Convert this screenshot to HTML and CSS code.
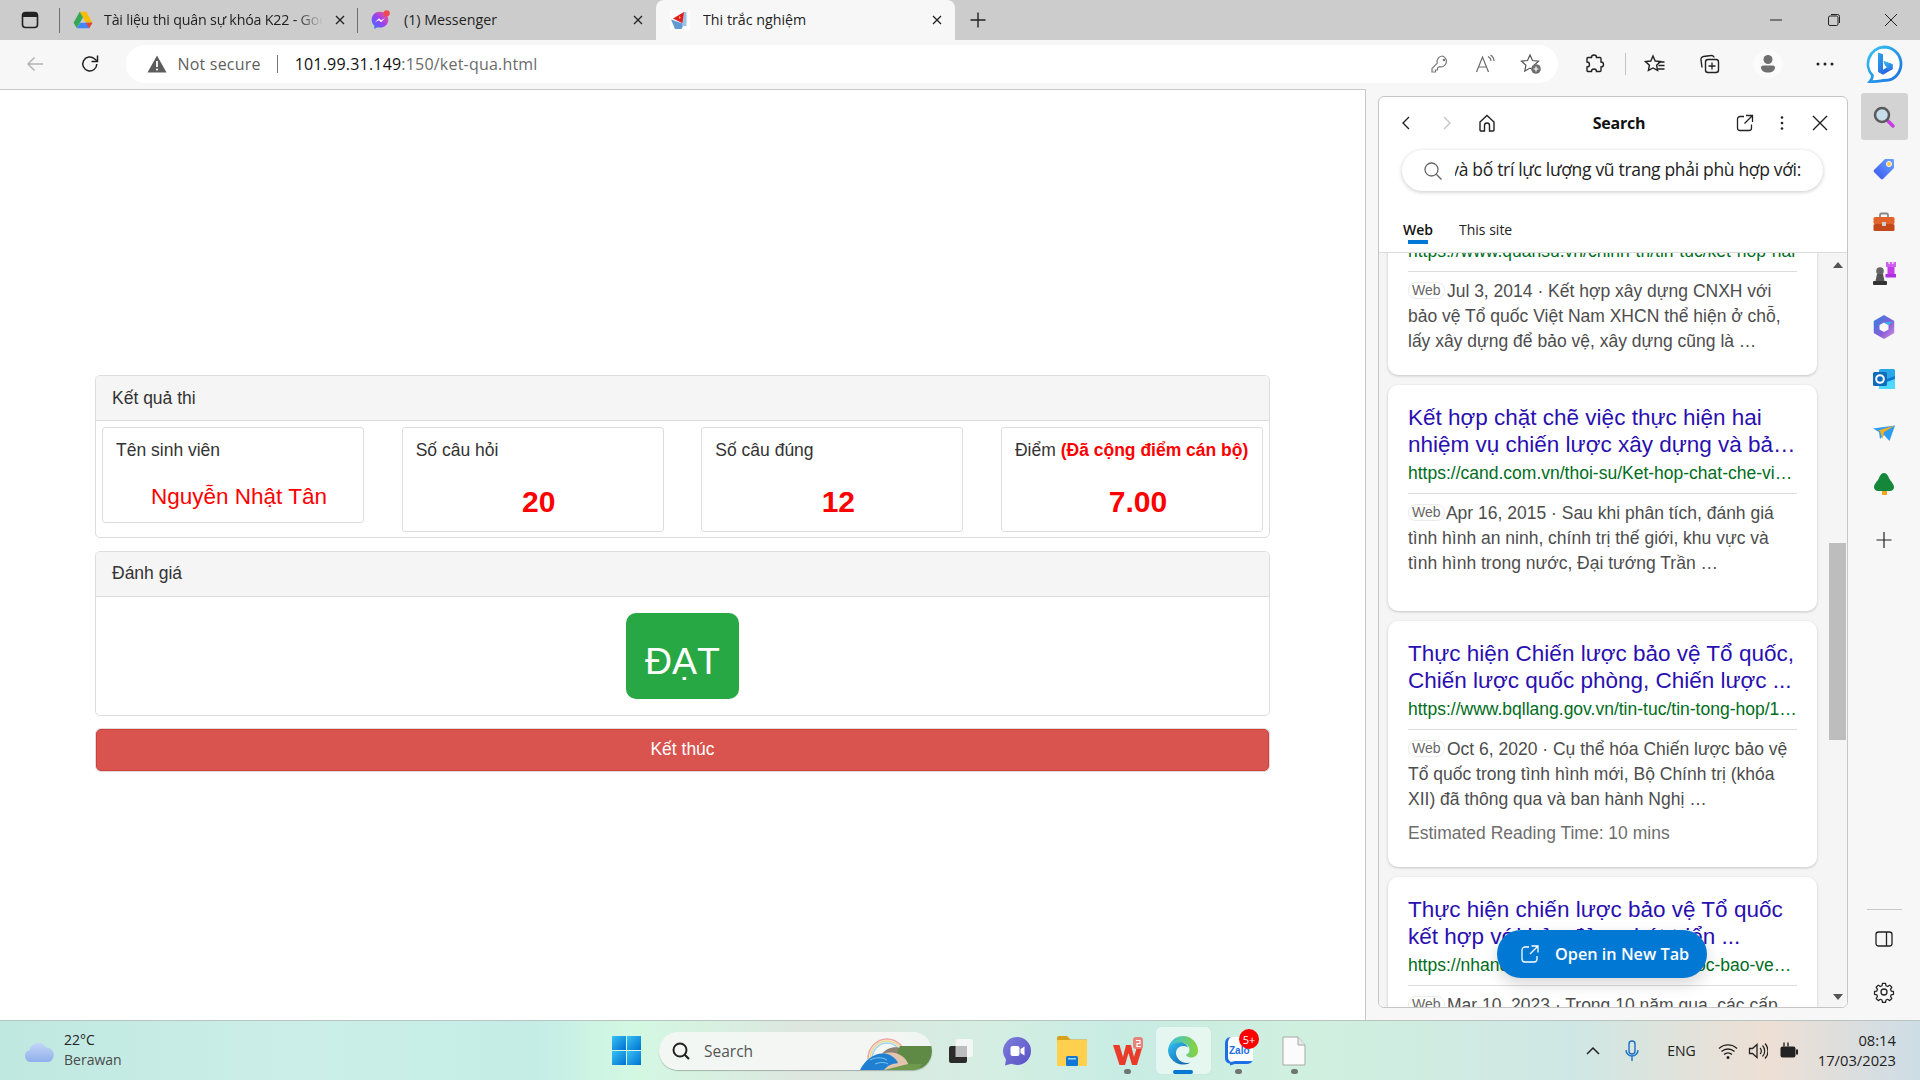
FILE: index.html
```html
<!DOCTYPE html>
<html lang="vi">
<head>
<meta charset="utf-8">
<title>Thi trắc nghiệm</title>
<link rel="stylesheet" href="styles.css">
</head>
<body>
<div class="window">
  <header class="tabstrip">
    <div class="tab-actions">
      <svg class="ic20" viewBox="0 0 20 20"><rect x="2.500" y="2.500" width="15" height="15" rx="3" fill="none" stroke="#222" stroke-width="1.600"/><rect x="3" y="3" width="14" height="4" fill="#222"/></svg>
    </div>
    <div class="tab tab-first">
      <svg class="ic20" viewBox="0 0 18 18"><path d="M6 1.500h6l5.500 10h-6z" fill="#fbbc04"/><path d="M6 1.500L.5 11.500l3 5L9 6.500z" fill="#34a853"/><path d="M3.500 16.500h11l3-5H6.500z" fill="#4285f4"/><path d="M11.500 11.500h6l-3 5z" fill="#ea4335"/></svg>
      <span class="tab-title tab-fade">Tài liệu thi quân sự khóa K22 - Google Drive</span>
      <svg class="tab-x" viewBox="0 0 12 12"><path d="M2 2l8 8M10 2l-8 8" stroke="#222" stroke-width="1.300"/></svg>
    </div>
    <div class="tab tab-sep">
      <svg class="ic20" viewBox="0 0 18 18"><defs><linearGradient id="ms" x1="0" y1="1" x2="1" y2="0"><stop offset="0" stop-color="#2a7bff"/><stop offset=".5" stop-color="#9b3ff5"/><stop offset="1" stop-color="#ff5b74"/></linearGradient></defs><path d="M9 1.500c-4.300 0-7.500 3.100-7.500 7.200 0 2.200.9 4 2.400 5.300v3l2.700-1.500c.8.200 1.600.3 2.400.3 4.300 0 7.500-3.100 7.500-7.100S13.300 1.500 9 1.500z" fill="url(#ms)"/><path d="M4.500 11L8 7.500l2 1.700 3.500-2-3.500 3.800-2-1.700z" fill="#fff"/><circle cx="15" cy="3" r="2.800" fill="#f0484e"/></svg>
      <span class="tab-title">(1) Messenger</span>
      <svg class="tab-x" viewBox="0 0 12 12"><path d="M2 2l8 8M10 2l-8 8" stroke="#222" stroke-width="1.300"/></svg>
    </div>
    <div class="tab tab-active">
      <svg class="ic20" viewBox="0 0 20 20"><rect width="20" height="20" fill="#fff"/><path d="M3 8.500L14 2v12z" fill="#e01f26"/><path d="M9 6l2 1.500-2 1.500z" fill="#ffc107"/><path d="M1 9.500l13 4.500-2.500 5H5z" fill="#5f9bd0"/><path d="M14 2h2.500v14H12z" fill="#9cc3e6"/></svg>
      <span class="tab-title">Thi trắc nghiệm</span>
      <svg class="tab-x" viewBox="0 0 12 12"><path d="M2 2l8 8M10 2l-8 8" stroke="#222" stroke-width="1.300"/></svg>
    </div>
    <div class="new-tab"><svg class="ic20" viewBox="0 0 20 20"><path d="M10 2.500v15M2.500 10h15" stroke="#222" stroke-width="1.400"/></svg></div>
    <div class="win-controls">
      <div class="win-btn"><svg class="ic14" viewBox="0 0 14 14"><path d="M1 7h12" stroke="#222" stroke-width="1"/></svg></div>
      <div class="win-btn"><svg class="ic14" viewBox="0 0 14 14"><rect x="1.500" y="3" width="9.500" height="9.500" rx="1.500" fill="none" stroke="#222"/><path d="M4 1.500h6.500a2 2 0 0 1 2 2V10" fill="none" stroke="#222"/></svg></div>
      <div class="win-btn"><svg class="ic14" viewBox="0 0 14 14"><path d="M1 1l12 12M13 1L1 13" stroke="#222" stroke-width="1"/></svg></div>
    </div>
  </header>

  <nav class="toolbar">
    <div class="tb-btn tb-back"><svg class="ic20" viewBox="0 0 20 20"><path d="M18 10H3M9.500 3.500L3 10l6.500 6.500" fill="none" stroke="#b5b5b5" stroke-width="1.500"/></svg></div>
    <div class="tb-btn tb-reload"><svg class="ic22" viewBox="0 0 22 22"><path d="M17.800 11a7 7 0 1 1-2.300-5.200L18 8" fill="none" stroke="#222" stroke-width="1.500"/><path d="M18.500 2.500V8.500h-6" fill="none" stroke="#222" stroke-width="1.500"/></svg></div>
    <div class="address">
      <svg class="ic20" viewBox="0 0 20 20"><path d="M10 1.500L19.500 18.500H.5z" fill="#5c5c5c"/><path d="M10 7v6" stroke="#fff" stroke-width="1.800"/><circle cx="10" cy="15.500" r="1.100" fill="#fff"/></svg>
      <span class="not-secure">Not secure</span>
      <span class="addr-sep"></span>
      <span class="url"><span class="url-host">101.99.31.149</span>:150/ket-qua.html</span>
      <div class="addr-icons">
        <svg class="ic20" viewBox="0 0 20 20"><path d="M12.500 2a5.500 5.500 0 0 0-5.200 7.200L2 14.500V18h3.500v-2h2v-2l1.700-1.300A5.500 5.500 0 1 0 12.500 2z" fill="none" stroke="#7a7a7a" stroke-width="1.200"/><circle cx="14" cy="6" r="1.300" fill="#7a7a7a"/></svg>
        <svg class="ic20" viewBox="0 0 20 20"><path d="M1.500 18L7.500 3l6 15M3.800 13h7.500" fill="none" stroke="#6a6a6a" stroke-width="1.200"/><path d="M13 2.500c2 1 3 2.500 3 4.500M15.500 1c2 1.300 3.500 3.500 3.500 6" fill="none" stroke="#6a6a6a" stroke-width="1.100"/></svg>
        <svg class="ic22" viewBox="0 0 22 22"><path d="M10 2l2.500 5.500 6 .7-4.400 4 1.100 5.800L10 15.100l-5.200 2.900 1.100-5.800-4.400-4 6-.7z" fill="none" stroke="#555" stroke-width="1.200"/><circle cx="16" cy="16" r="4.800" fill="#6e6e6e"/><path d="M16 13.500v5M13.500 16h5" stroke="#fff" stroke-width="1.200"/></svg>
      </div>
    </div>
    <div class="tb-btn tb-ext"><svg class="ic22" viewBox="0 0 22 22"><path d="M8.500 4.500a2.500 2.500 0 0 1 5 0H17a1 1 0 0 1 1 1V9a2.500 2.500 0 0 1 0 5v3.500a1 1 0 0 1-1 1h-3.500a2.500 2.500 0 0 0-5 0H5a1 1 0 0 1-1-1V14a2.500 2.500 0 0 0 0-5V5.500a1 1 0 0 1 1-1z" fill="none" stroke="#222" stroke-width="1.400"/></svg></div>
    <span class="tb-sep"></span>
    <div class="tb-btn tb-fav"><svg class="ic22" viewBox="0 0 22 22"><path d="M9 3l2.200 5 5.300.6-3.900 3.600 1 5.200L9 15l-4.600 2.400 1-5.200L1.500 8.600 6.800 8z" fill="none" stroke="#222" stroke-width="1.400"/><path d="M14 9h6.500M14.500 12.500h6M14 16h6.500" stroke="#222" stroke-width="1.300"/></svg></div>
    <div class="tb-btn tb-coll"><svg class="ic22" viewBox="0 0 22 22"><rect x="6.500" y="6.500" width="13" height="13" rx="2.500" fill="none" stroke="#222" stroke-width="1.400"/><path d="M13 9.500v7M9.500 13h7" stroke="#222" stroke-width="1.300"/><path d="M3 14.500L2 7a3 3 0 0 1 2.600-3.500L12 2.500a2.500 2.500 0 0 1 3 2" fill="none" stroke="#222" stroke-width="1.400"/></svg></div>
    <div class="tb-btn tb-profile"><svg class="ic30" viewBox="0 0 30 30"><circle cx="15" cy="15" r="14.500" fill="#fbfbfb"/><circle cx="15" cy="10.500" r="4.500" fill="#707070"/><path d="M8 18.500c0-1.200 1-2 2-2h10c1 0 2 .8 2 2 0 3-3 5-7 5s-7-2-7-5z" fill="#707070"/></svg></div>
    <div class="tb-btn tb-dots"><svg class="ic22" viewBox="0 0 22 22"><circle cx="4" cy="11" r="1.500" fill="#222"/><circle cx="11" cy="11" r="1.500" fill="#222"/><circle cx="18" cy="11" r="1.500" fill="#222"/></svg></div>
    <div class="tb-btn tb-bing"><svg class="ic38" viewBox="0 0 38 38"><defs><linearGradient id="bg1" x1="0" y1="0" x2="1" y2="1"><stop offset="0" stop-color="#28a8ea"/><stop offset="1" stop-color="#2a4fe0"/></linearGradient><linearGradient id="bg2" x1="0" y1="0" x2="1" y2="1"><stop offset="0" stop-color="#33c7ee"/><stop offset="1" stop-color="#2a6ee8"/></linearGradient><linearGradient id="bg3" x1="0" y1="0" x2="1" y2="1"><stop offset="0" stop-color="#37c6f4"/><stop offset="1" stop-color="#1a6fe0"/></linearGradient></defs><path d="M19 2a17 17 0 0 1 8 32c-3 1.500-6 1.500-9 1.500-2 0-5 1.500-13 1 2-2 2.500-4 2.500-6A17 17 0 0 1 19 2z" fill="#fff" stroke="url(#bg3)" stroke-width="2.800"/><path d="M13 7.500l5 1.800v15.500l5-3-3-1.400-1.500-4.500 9 3.300v5l-9.500 5.500L13 27z" fill="url(#bg1)"/><path d="M18.500 15.900l9 3.300v5l-4.500 1z" fill="url(#bg2)"/></svg></div>
  </nav>

  <div class="content">
    <main class="page">
      <section class="panel">
        <div class="panel-head">Kết quả thi</div>
        <div class="stats">
          <div class="stat stat-short">
            <div class="stat-label">Tên sinh viên</div>
            <div class="stat-name">Nguyễn Nhật Tân</div>
          </div>
          <div class="stat">
            <div class="stat-label">Số câu hỏi</div>
            <div class="stat-value">20</div>
          </div>
          <div class="stat">
            <div class="stat-label">Số câu đúng</div>
            <div class="stat-value">12</div>
          </div>
          <div class="stat">
            <div class="stat-label">Điểm <b class="stat-note">(Đã cộng điểm cán bộ)</b></div>
            <div class="stat-value">7.00</div>
          </div>
        </div>
      </section>
      <section class="panel">
        <div class="panel-head">Đánh giá</div>
        <div class="verdict"><div class="badge">ĐẠT</div></div>
      </section>
      <button class="finish">Kết thúc</button>
    </main>

    <aside class="side">
      <div class="side-head">
        <svg class="ic20" viewBox="0 0 20 20"><path d="M13 4l-6 6 6 6" fill="none" stroke="#222" stroke-width="1.400"/></svg>
        <svg class="ic20 sh-fwd" viewBox="0 0 20 20"><path d="M7 4l6 6-6 6" fill="none" stroke="#c4c4c4" stroke-width="1.400"/></svg>
        <svg class="ic20 sh-home" viewBox="0 0 20 20"><path d="M3 9l7-6.500L17 9v8a1 1 0 0 1-1 1h-3.500v-5.500a2.500 2.500 0 0 0-5 0V18H4a1 1 0 0 1-1-1z" fill="none" stroke="#222" stroke-width="1.400"/></svg>
        <div class="side-title">Search</div>
        <svg class="ic20" viewBox="0 0 20 20"><path d="M9 3.500H5a2.500 2.500 0 0 0-2.500 2.500v9A2.500 2.500 0 0 0 5 17.500h9a2.500 2.500 0 0 0 2.500-2.500v-3.500" fill="none" stroke="#222" stroke-width="1.300"/><path d="M11 2.500h6.500V9M17.500 2.500L9.500 10.500" fill="none" stroke="#222" stroke-width="1.300"/></svg>
        <svg class="ic20 sh-dots" viewBox="0 0 20 20"><circle cx="10" cy="4.500" r="1.300" fill="#222"/><circle cx="10" cy="10" r="1.300" fill="#222"/><circle cx="10" cy="15.500" r="1.300" fill="#222"/></svg>
        <svg class="ic20 sh-close" viewBox="0 0 20 20"><path d="M3 3l14 14M17 3L3 17" stroke="#222" stroke-width="1.400"/></svg>
      </div>
      <div class="side-search">
        <svg class="ic20" viewBox="0 0 20 20"><circle cx="8.500" cy="8.500" r="6.500" fill="none" stroke="#666" stroke-width="1.300"/><path d="M13.300 13.300L18.500 18.500" stroke="#666" stroke-width="1.400"/></svg>
        <div class="side-query"><span class="side-query-text">và bố trí lực lượng vũ trang phải phù hợp với:</span></div>
      </div>
      <div class="side-tabs">
        <span class="side-tab side-tab-on">Web</span>
        <span class="side-tab">This site</span>
      </div>
      <div class="side-body">
        <div class="results">
          <article class="result result-first">
            <div class="r-url">https://www.quansu.vn/chinh-tri/tin-tuc/ket-hop-nam…</div>
            <div class="r-rule"></div>
            <p class="r-text"><span class="r-tag">Web</span> Jul 3, 2014 · Kết hợp xây dựng CNXH với<br>bảo vệ Tổ quốc Việt Nam XHCN thể hiện ở chỗ,<br>lấy xây dựng để bảo vệ, xây dựng cũng là …</p>
          </article>
          <article class="result result-tall">
            <h3 class="r-title">Kết hợp chặt chẽ việc thực hiện hai<br>nhiệm vụ chiến lược xây dựng và bả…</h3>
            <div class="r-url">https://cand.com.vn/thoi-su/Ket-hop-chat-che-vi…</div>
            <div class="r-rule"></div>
            <p class="r-text"><span class="r-tag">Web</span> Apr 16, 2015 · Sau khi phân tích, đánh giá<br>tình hình an ninh, chính trị thế giới, khu vực và<br>tình hình trong nước, Đại tướng Trần …</p>
          </article>
          <article class="result">
            <h3 class="r-title">Thực hiện Chiến lược bảo vệ Tổ quốc,<br>Chiến lược quốc phòng, Chiến lược ...</h3>
            <div class="r-url">https://www.bqllang.gov.vn/tin-tuc/tin-tong-hop/1…</div>
            <div class="r-rule"></div>
            <p class="r-text"><span class="r-tag">Web</span> Oct 6, 2020 · Cụ thể hóa Chiến lược bảo vệ<br>Tổ quốc trong tình hình mới, Bộ Chính trị (khóa<br>XII) đã thông qua và ban hành Nghị …</p>
            <p class="r-meta">Estimated Reading Time: 10 mins</p>
          </article>
          <article class="result">
            <h3 class="r-title">Thực hiện chiến lược bảo vệ Tổ quốc<br>kết hợp với bảo đảm phát triển ...</h3>
            <div class="r-url">https://nhandan.vn/thuc-hien-chien-luoc-bao-ve…</div>
            <div class="r-rule"></div>
            <p class="r-text"><span class="r-tag">Web</span> Mar 10, 2023 · Trong 10 năm qua, các cấp</p>
          </article>
        </div>
        <div class="scroll">
          <svg class="scroll-arrow" viewBox="0 0 10 6"><path d="M5 0l5 6H0z" fill="#555"/></svg>
          <div class="scroll-track"><div class="scroll-thumb"></div></div>
          <svg class="scroll-arrow" viewBox="0 0 10 6"><path d="M5 6L0 0h10z" fill="#555"/></svg>
        </div>
      </div>
      <div class="open-new">
        <svg class="ic20" viewBox="0 0 20 20"><path d="M9 3H5a3 3 0 0 0-3 3v9a3 3 0 0 0 3 3h9a3 3 0 0 0 3-3v-3" fill="none" stroke="#fff" stroke-width="1.300"/><path d="M11.500 2h6.500v6.500M18 2l-8 8" fill="none" stroke="#fff" stroke-width="1.300"/></svg>
        <span>Open in New Tab</span>
      </div>
    </aside>

    <div class="rail">
      <div class="rail-top">
        <div class="rail-item rail-on"><svg class="ic24" viewBox="0 0 24 24"><path d="M15 15l6 6" stroke="#c53ce0" stroke-width="3.500" stroke-linecap="round"/><circle cx="10" cy="10" r="7" fill="#c6deeb" stroke="#5a5a5a" stroke-width="2.500"/></svg></div>
        <div class="rail-item"><svg class="ic24" viewBox="0 0 24 24"><defs><linearGradient id="tag" x1="0" y1="1" x2="1" y2="0"><stop offset="0" stop-color="#3a55f0"/><stop offset="1" stop-color="#6aa6ff"/></linearGradient></defs><path d="M13 2h8a1 1 0 0 1 1 1v8L11 22a1.500 1.500 0 0 1-2 0L2 15a1.500 1.500 0 0 1 0-2z" fill="url(#tag)"/><circle cx="17" cy="7" r="2.500" fill="#ffc83d" stroke="#fff"/></svg></div>
        <div class="rail-item"><svg class="ic24" viewBox="0 0 24 24"><path d="M8 8V5a1.500 1.500 0 0 1 1.500-1.500h5A1.500 1.500 0 0 1 16 5v3" fill="none" stroke="#888" stroke-width="1.800"/><rect x="1.500" y="7" width="21" height="7" rx="1.500" fill="#e2622b"/><rect x="1.500" y="14" width="21" height="7" rx="1.500" fill="#c5481b"/><rect x="10" y="12" width="4" height="4" fill="#d0d0d0"/></svg></div>
        <div class="rail-item"><svg class="ic24" viewBox="0 0 24 24"><rect x="15.500" y="4" width="7" height="8" fill="#c53ce8"/><path d="M14 0h2.500v2h1.300V0h2.400v2h1.300V0H24v5H14z" fill="#d060f0"/><rect x="13.500" y="12" width="10.500" height="3.500" fill="#b030e0"/><circle cx="8" cy="9" r="3.800" fill="#666"/><path d="M5 12h6l1.500 7h-9z" fill="#555"/><rect x="1" y="19" width="14" height="4" rx="1" fill="#333"/></svg></div>
        <div class="rail-item"><svg class="ic24" viewBox="0 0 24 24"><defs><linearGradient id="cp" x1="0" y1="0" x2="1" y2="1"><stop offset="0" stop-color="#2f7fe0"/><stop offset=".6" stop-color="#8a5fd8"/><stop offset="1" stop-color="#d08fe0"/></linearGradient></defs><path d="M12 1l9.500 5.500v11L12 23l-9.500-5.500v-11z" fill="url(#cp)" stroke="url(#cp)" stroke-linejoin="round" stroke-width="1.500"/><path d="M12 7.500l4.500 2.500v4.500L12 17l-4.500-2.500V10z" fill="#f7f7f7"/><path d="M12 7.500L21.500 6.500 16.500 10z" fill="#33b5f0"/></svg></div>
        <div class="rail-item"><svg class="ic24" viewBox="0 0 24 24"><rect x="7" y="2" width="16" height="20" rx="1.500" fill="#28a8ea"/><path d="M7 12h16v9a1 1 0 0 1-1 1H8a1 1 0 0 1-1-1z" fill="#50d9ff"/><path d="M9 14l14-5v3L12 16z" fill="#0f78d4"/><rect x="1" y="5" width="14" height="14" rx="1.500" fill="#0f6cbd"/><circle cx="8" cy="12" r="3.800" fill="none" stroke="#fff" stroke-width="2"/></svg></div>
        <div class="rail-item"><svg class="ic24" viewBox="0 0 24 24"><path d="M1 8.500L23 5.500 17.500 21 12 15l-4 4-1-7z" fill="#2f9bf0"/><path d="M6 10.500L23 5.500 12 12l-1.500 7-2.500-8z" fill="#f4b01f"/></svg></div>
        <div class="rail-item"><svg class="ic24" viewBox="0 0 24 24"><rect x="10" y="17" width="5" height="6" fill="#f2a51f"/><path d="M12 1c3 0 4 3 5.500 6 1 2 4.500 5 4.500 8 0 2.500-2 4-4 4H6c-2 0-4-1.500-4-4 0-3 3.500-6 4.500-8C8 4 9 1 12 1z" fill="#14873a"/></svg></div>
        <div class="rail-item rail-plus"><svg class="ic20" viewBox="0 0 20 20"><path d="M10 2v16M2.500 10h15" stroke="#222" stroke-width="1.200"/></svg></div>
      </div>
      <div class="rail-bottom">
        <div class="rail-line"></div>
        <svg class="ic20 rail-panel" viewBox="0 0 20 20"><rect x="2" y="3" width="16" height="14" rx="2.500" fill="none" stroke="#222" stroke-width="1.300"/><path d="M12.500 3v14" stroke="#222" stroke-width="1.300"/></svg>
        <svg class="ic22" viewBox="0 0 22 22"><path d="M9.300 1.500h3.400l.5 2.600 1.900.8 2.200-1.500 2.400 2.400-1.500 2.200.8 1.900 2.500.5v3.200l-2.500.5-.8 1.900 1.500 2.200-2.400 2.400-2.200-1.500-1.900.8-.5 2.500H9.300l-.5-2.500-1.900-.8-2.200 1.500-2.400-2.400 1.500-2.200-.8-1.900-2.500-.5v-3.200l2.500-.5.8-1.900-1.500-2.200 2.400-2.400 2.200 1.500 1.900-.8z" transform="translate(1.100 1.100) scale(.9)" fill="none" stroke="#222" stroke-width="1.400" stroke-linejoin="round"/><circle cx="11" cy="11" r="3" fill="none" stroke="#222" stroke-width="1.300"/></svg>
      </div>
    </div>
  </div>

  <footer class="taskbar">
    <div class="weather">
      <svg class="weather-ic" viewBox="0 0 32 26"><defs><linearGradient id="cl" x1="0" y1="0" x2="0" y2="1"><stop offset="0" stop-color="#c2d4f8"/><stop offset="1" stop-color="#8fb0ea"/></linearGradient></defs><path d="M7 24a6 6 0 0 1-1.500-11.800A9 9 0 0 1 22 9.500a7.500 7.500 0 0 1 3 14.500z" fill="url(#cl)"/></svg>
      <div class="weather-text"><div class="w-temp">22°C</div><div class="w-desc">Berawan</div></div>
    </div>
    <svg class="start" viewBox="0 0 29 29"><defs><linearGradient id="win" x1="0" y1="0" x2="1" y2="1"><stop offset="0" stop-color="#36c2f5"/><stop offset="1" stop-color="#0070d0"/></linearGradient></defs><rect width="14" height="14" fill="url(#win)"/><rect x="15" width="14" height="14" fill="url(#win)"/><rect y="15" width="14" height="14" fill="url(#win)"/><rect x="15" y="15" width="14" height="14" fill="url(#win)"/></svg>
    <div class="task-search">
      <svg class="ic20" viewBox="0 0 20 20"><circle cx="9" cy="9" r="6.500" fill="none" stroke="#222" stroke-width="2"/><path d="M13.500 13.500L18 18" stroke="#222" stroke-width="2.200"/></svg>
      <span class="ts-label">Search</span>
      <svg class="ts-art" viewBox="0 0 72 38"><path d="M8 27a19 20 0 0 1 38 0" fill="none" stroke="#f0a5a5" stroke-width="1.500"/><path d="M10 27a17 18 0 0 1 34 0" fill="none" stroke="#eed98a" stroke-width="1.500"/><path d="M12 27a15 16 0 0 1 30 0" fill="none" stroke="#9fd3ee" stroke-width="1.500"/><path d="M22 22c4-6 14-9 20-5l-3 8z" fill="#8d8272"/><path d="M40 14h32v10c0 8-5 14-10 14H30z" fill="#5f8a45"/><path d="M18 24c10-6 22-4 28 4l6 10H24z" fill="#e3c4ac"/><path d="M0 38c6-12 18-20 30-15 4 2 7 5 8 8-6 1-10 2-14 7z" fill="#1f7fd0"/><path d="M10 28c6-3 12-3 17 0M15 32c5-2 10-2 13 0" fill="none" stroke="#7cc8f2" stroke-width="1"/><path d="M24 38l24-6h14l-4 6z" fill="#6f9a4d"/></svg>
    </div>
    <div class="task-items">
      <div class="task-item"><svg class="ic26" viewBox="0 0 26 26"><rect x="7.500" y="1" width="17.500" height="18" rx="2" fill="#f8f8f8" fill-opacity=".85"/><rect x="1" y="8" width="18" height="17" rx="2" fill="#2b2b2b"/><rect x="7.500" y="8" width="11.500" height="11" fill="#bdbdbd"/></svg></div>
      <div class="task-item"><svg class="ic30" viewBox="0 0 30 30"><defs><linearGradient id="chat" x1="0" y1="0" x2="1" y2="1"><stop offset="0" stop-color="#7b7fdc"/><stop offset="1" stop-color="#5a4fc4"/></linearGradient></defs><path d="M15 1a14 14 0 0 1 0 28c-2 0-4-.5-5.500-1.200L3 29.500l1-6A14 14 0 0 1 15 1z" fill="url(#chat)"/><rect x="8.500" y="10" width="9" height="10" rx="2" fill="#fff"/><path d="M18.500 13l4-2.500v9l-4-2.500z" fill="#fff"/></svg></div>
      <div class="task-item"><svg class="ic30" viewBox="0 0 30 30"><path d="M0 1.500a1.500 1.500 0 0 1 1.500-1.500H10l3.500 3.500H30V9H0z" fill="#d9a21b"/><rect y="4" width="30" height="26" rx="1" fill="#ffcf4d"/><rect x="9" y="20" width="12" height="10" rx="1.500" fill="#0f78d4"/><rect x="11" y="22" width="8" height="1.500" fill="#9fd3f5"/></svg></div>
      <div class="task-item"><svg class="ic30" viewBox="0 0 30 30"><path d="M0 9h6.500l3.500 12 3-12h5l3 12L24.500 9H30l-6 20h-5l-3.500-12L12 29H6.500z" fill="#e93a2a"/><rect x="20" y="1" width="10" height="12" rx="3" fill="#e8837a"/><path d="M23 4.500h4v3h-3v3h4" fill="none" stroke="#fff" stroke-width="1.200"/></svg><span class="task-dot"></span></div>
      <div class="task-item task-active"><svg class="ic32" viewBox="0 0 32 32"><defs><linearGradient id="ed1" x1="0" y1="0" x2="1" y2="1"><stop offset="0" stop-color="#35c1f1"/><stop offset="1" stop-color="#0b5aa8"/></linearGradient><linearGradient id="ed2" x1="0" y1="0" x2="1" y2="0"><stop offset="0" stop-color="#35c1f1"/><stop offset="1" stop-color="#8ad433"/></linearGradient></defs><path d="M16 1a15 15 0 0 1 15 15c0 4-3 6.500-7 6.500-3 0-5-1.500-5-3 2-.5 3.500-2 3.500-4.500C22.500 11 19 8 14 8 8 8 3 12 1.200 14A15 15 0 0 1 16 1z" fill="url(#ed2)"/><path d="M1 16C1 11 6 7.500 12 7.500c5 0 8 2 9 5-1-1-3-1.500-5-1.500-4 0-7 3-7 7 0 5 5 10 11 10 1 0 2.500-.2 4-.8A15 15 0 0 1 1 16z" fill="url(#ed1)"/></svg><span class="task-bar"></span></div>
      <div class="task-item"><svg class="ic30" viewBox="0 0 30 30"><path d="M7 1h16a6 6 0 0 1 6 6v15a6 6 0 0 1-6 6H11l-5 1.500v-2.500A6 6 0 0 1 1 22V7a6 6 0 0 1 6-6z" fill="#fff"/><path d="M7 1C3 1 1 4 1 7v15c0 3 2 5.500 5 5.500V29.500l5-1.500h12c2.500 0 4.500-1 5.500-3H11L7 26c-2-1-3-3-3-5V7c0-2.500 1-5 3-6z" fill="#1d6fe5"/><text class="zalo-txt" x="5" y="18">Zalo</text></svg><span class="zalo-badge">5+</span><span class="task-dot"></span></div>
      <div class="task-item"><svg class="ic30" viewBox="0 0 24 30"><path d="M1 1h15l7 8v20H1z" fill="#fbfbfb" stroke="#a8a8a8"/><path d="M16 1v8h7" fill="#e8e8e8" stroke="#a8a8a8"/></svg><span class="task-dot"></span></div>
    </div>
    <div class="tray">
      <svg class="ic14" viewBox="0 0 14 14"><path d="M1 10l6-6 6 6" fill="none" stroke="#222" stroke-width="1.500"/></svg>
      <svg class="ic22 tray-mic" viewBox="0 0 22 22"><rect x="8" y="1" width="6" height="13" rx="3" fill="none" stroke="#1d6fc5" stroke-width="1.400"/><path d="M5 10a6 6 0 0 0 12 0M11 16v5" fill="none" stroke="#1d6fc5" stroke-width="1.400"/></svg>
      <span class="tray-lang">ENG</span>
      <svg class="ic20 tray-wifi" viewBox="0 0 20 20"><path d="M1 7.500a13 13 0 0 1 18 0M3.500 10.500a9.500 9.500 0 0 1 13 0M6 13.500a6 6 0 0 1 8 0" fill="none" stroke="#222" stroke-width="1.400"/><circle cx="10" cy="16.500" r="1.500" fill="#222"/></svg>
      <svg class="ic20 tray-vol" viewBox="0 0 20 20"><path d="M1.500 7.500h3l4.500-4v13l-4.500-4h-3z" fill="none" stroke="#222" stroke-width="1.300"/><path d="M12 7a4 4 0 0 1 0 6M14.500 4.500a8 8 0 0 1 0 11M17 2.500a11 11 0 0 1 0 15" fill="none" stroke="#222" stroke-width="1.200"/></svg>
      <svg class="ic20 tray-bat" viewBox="0 0 20 20"><rect x="1.500" y="5.500" width="15" height="11" rx="2" fill="#222"/><rect x="17" y="8.500" width="2" height="5" fill="#222"/><path d="M5 1.500v4M9 1.500v4" stroke="#222" stroke-width="1.400"/></svg>
      <div class="clock"><div>08:14</div><div>17/03/2023</div></div>
    </div>
  </footer>
</div>
</body>
</html>
```

FILE: styles.css
```css
* { box-sizing: border-box; }
html, body { margin: 0; padding: 0; height: 100%; overflow: hidden; }
body { font-family: "Liberation Sans", Arial, sans-serif; background: #fff; }
svg { display: block; flex: none; }
.ic14 { width: 14px; height: 14px; }
.ic20 { width: 20px; height: 20px; }
.ic22 { width: 22px; height: 22px; }
.ic24 { width: 24px; height: 24px; }
.ic26 { width: 26px; height: 26px; }
.ic30 { width: 30px; height: 30px; }
.ic32 { width: 32px; height: 32px; }
.ic38 { width: 38px; height: 38px; }

.window { width: 1920px; height: 1080px; display: flex; flex-direction: column; }

/* tab strip */
.tabstrip { height: 40px; background: #cccccc; display: flex; align-items: stretch; font-family: "Open Sans", sans-serif; font-size: 14.250px; color: #222; flex: none; }
.tab-actions { width: 60px; display: flex; align-items: center; justify-content: center; padding-right: 1px; position: relative; }
.tab-actions::after, .tab-sep::before { content: ""; position: absolute; width: 1px; top: 8px; bottom: 7px; background: #6f6f6f; }
.tab-actions::after { right: 0; }
.tab { width: 298px; display: flex; align-items: center; padding: 0 12px 0 13px; position: relative; }
.tab-sep { padding-left: 12px; }
.tab-sep::before { left: -1px; }
.tab-active { background: #f7f7f7; border-radius: 8px 8px 0 0; width: 299px; padding-left: 14px; }
.tab-title { flex: 1; margin-left: 13px; white-space: nowrap; overflow: hidden; min-width: 0; line-height: 20px; margin-bottom: 1px; }
.tab-sep .tab-title { margin-left: 14px; }
.tab-first .tab-title { margin-left: 11px; letter-spacing: -.2px; }
.tab-fade { margin-right: 11px; -webkit-mask-image: linear-gradient(90deg, #000 88%, transparent); mask-image: linear-gradient(90deg, #000 88%, transparent); }
.tab-x { width: 12px; height: 12px; flex: none; }
.new-tab { width: 36px; margin-left: 5px; display: flex; align-items: center; justify-content: center; }
.win-controls { margin-left: auto; display: flex; width: 173px; }
.win-btn { flex: 1; display: flex; align-items: center; justify-content: center; }

/* toolbar */
.toolbar { height: 49px; background: #f7f7f7; display: flex; align-items: center; padding-bottom: 1px; flex: none; }
.tb-btn { width: 36px; height: 36px; display: flex; align-items: center; justify-content: center; flex: none; }
.tb-back { margin-left: 17px; }
.tb-reload { margin-left: 19px; }
.address { margin-left: 17.500px; width: 1432.500px; height: 38px; background: #fff; border-radius: 19px; display: flex; align-items: center; padding: 0 16px 0 21px; font-family: "Open Sans", sans-serif; font-size: 16px; }
.not-secure { margin-left: 11px; color: #5f5f5f; letter-spacing: .2px; }
.addr-sep { width: 1px; height: 18px; background: #777; margin: 0 17px 0 16px; }
.url { color: #6b6b6b; letter-spacing: .2px; }
.url-host { color: #111; }
.addr-icons { margin-left: auto; display: flex; align-items: center; gap: 25px; }
.tb-ext { margin-left: 18px; }
.tb-sep { width: 1px; height: 22px; background: #c4c4c4; margin: 0 11px 0 13px; flex: none; }
.tb-coll { margin-left: 19px; }
.tb-profile { margin-left: 22px; }
.tb-dots { margin-left: 21px; }
.tb-bing { margin-left: 23px; }

/* content */
.content { flex: 1; display: flex; min-height: 0; background: #f7f7f7; }
.page { width: 1366px; height: 931px; background: #fff; border-top: 1px solid #c8c8c8; border-right: 1px solid #c8c8c8; padding: 285px 95px 0 95px; color: #333; font-size: 17.500px; flex: none; }
.panel { border: 1px solid #ddd; border-radius: 5px; margin-bottom: 12.500px; background: #fff; }
.panel-head { height: 45px; background: #f5f5f5; border-bottom: 1.250px solid #ddd; padding-left: 16px; display: flex; align-items: center; border-radius: 4px 4px 0 0; }
.stats { display: grid; grid-template-columns: repeat(4, 262px); justify-content: space-between; align-items: start; padding: 6px 6px 5px; }
.stat { height: 105px; border: 1px solid #ddd; border-radius: 3px; padding: 12px 13px; }
.stat-short { height: 96px; }
.stat-label { line-height: 20px; white-space: nowrap; }
.stat-note { color: #f00; }
.stat-name { color: #f00; font-size: 22.500px; line-height: 26px; padding-left: 12px; margin-top: 23.500px; text-align: center; }
.stat-value { color: #f00; font-size: 30px; font-weight: bold; line-height: 34px; padding-left: 12px; margin-top: 25px; text-align: center; }
.verdict { display: flex; justify-content: center; padding: 16px 0; }
.badge { width: 113px; height: 86px; background: #28a745; border-radius: 10px; color: #fff; font-size: 37.500px; display: flex; align-items: center; justify-content: center; padding-top: 12px; }
.finish { display: block; width: calc(100% - 2px); height: 42.500px; margin: 13px 1px 0; background: #d9534f; border: 1px solid #d43f3a; border-radius: 5px; color: #fff; font: 17.500px "Liberation Sans", Arial, sans-serif; box-shadow: 0 0 0 1px #ddd; padding: 0; }

/* side panel */
.side { width: 470px; height: 912px; margin: 7px 0 0 12px; background: #fff; border: 1px solid #c6c6c6; border-radius: 6px; display: flex; flex-direction: column; position: relative; overflow: hidden; font-family: "Open Sans", sans-serif; flex: none; }
.side-head { height: 53px; display: flex; align-items: center; padding: 0 17px 2px; flex: none; }
.sh-fwd { margin-left: 21px; }
.sh-home { margin-left: 20px; }
.side-title { flex: 1; text-align: center; font-weight: 700; font-size: 16px; padding-left: 6px; color: #111; letter-spacing: -.2px; }
.sh-dots { margin-left: 17px; }
.sh-close { margin-left: 18px; }
.side-search { height: 41px; margin: 0 24px 0 23px; border-radius: 21px; background: #fff; box-shadow: 0 1px 4px rgba(0,0,0,.22); display: flex; align-items: center; padding: 0 22px 0 21px; flex: none; }
.side-query { flex: 1; min-width: 0; margin-left: 12px; overflow: hidden; display: flex; justify-content: flex-end; white-space: nowrap; font-size: 17.500px; color: #222; letter-spacing: -.32px; line-height: 24px; margin-bottom: 3px; }
.side-query-text { flex: none; }
.side-tabs { height: 62px; display: flex; align-items: flex-end; gap: 26px; padding: 0 0 13px 24px; border-bottom: 1px solid #dcdcdc; font-size: 14px; color: #222; flex: none; }
.side-tab { position: relative; line-height: 19px; }
.side-tab-on { font-weight: 600; color: #111; }
.side-tab-on::after { content: ""; position: absolute; left: 5px; right: 5px; bottom: -5px; height: 4px; background: #0078d4; }
.side-body { flex: 1; min-height: 0; display: flex; background: #f5f5f5; }
.results { flex: 1; min-width: 0; overflow: hidden; padding: 0 12px 0 9px; font-family: "Liberation Sans", Arial, sans-serif; }
.result { background: #fff; border-radius: 10px; box-shadow: 0 1px 3px rgba(0,0,0,.2); padding: 18.500px 20px 21.500px; margin-bottom: 10px; }
.result-first { padding-top: 0; margin-top: -14.500px; border-radius: 0 0 10px 10px; }
.result-tall { padding-bottom: 35.500px; }
.r-title { margin: 0; font-weight: normal; font-size: 22.500px; line-height: 27px; color: #2a0fb0; white-space: nowrap; }
.r-url { margin-top: 3px; font-size: 17.500px; line-height: 25px; color: #006d21; white-space: nowrap; overflow: hidden; }
.result-first .r-url { margin-top: 0; }
.r-rule { height: 1px; background: #dcdcdc; margin: 7px 0 7px; }
.r-text { margin: 0; font-size: 17.500px; line-height: 25px; color: #4d4d4d; white-space: nowrap; }
.r-tag { display: inline-block; font-size: 14px; line-height: 15px; color: #666; border: 1px solid #ececec; border-radius: 8px; padding: 0 3px; vertical-align: 2px; margin-right: -2.500px; }
.r-meta { margin: 9px 0 0; font-size: 17.500px; line-height: 25px; color: #6e6e6e; white-space: nowrap; }
.scroll { width: 17px; margin-right: 1px; display: flex; flex-direction: column; align-items: center; flex: none; padding: 9px 0 7px; }
.scroll-arrow { width: 10px; height: 6px; }
.scroll-track { flex: 1; width: 100%; padding-top: 274.500px; }
.scroll-thumb { height: 197px; background: #bdbdbd; }
.open-new { position: absolute; left: 118px; top: 833px; width: 210px; height: 48px; border-radius: 24px; background: #0078d4; color: #fff; display: flex; align-items: center; gap: 15px; padding-left: 23px; font-size: 16.250px; font-weight: 600; box-shadow: 0 6px 16px rgba(0,0,0,.16); }

/* rail */
.rail { flex: 1; display: flex; flex-direction: column; justify-content: space-between; align-items: center; padding: 4px 0 17px; }
.rail-top { display: flex; flex-direction: column; gap: 5.500px; }
.rail-item { width: 47px; height: 47px; display: flex; align-items: center; justify-content: center; border-radius: 3px; }
.rail-on { background: #d3d3d3; }
.rail-plus { margin-top: 3px; }
.rail-bottom { display: flex; flex-direction: column; align-items: center; }
.rail-line { width: 35px; height: 1px; background: #c8c8c8; margin-bottom: 19px; }
.rail-panel { margin-bottom: 32px; }

/* taskbar */
.taskbar { height: 60px; flex: none; display: flex; align-items: center; position: relative; border-top: 1px solid #b9c4c0; font-family: "Open Sans", sans-serif; color: #222;
  background: linear-gradient(90deg, #bfe8e0 0%, #cbeee8 15%, #c4ede6 28%, #d3f8e2 33%, #dde6df 42%, #d4eee3 52%, #c8ece3 58%, #d0f0df 68%, #cfe7e4 82%, #eedfd4 92%, #cddde6 100%); }
.weather { width: 612px; display: flex; align-items: center; padding-left: 24px; }
.weather-ic { width: 32px; height: 26px; }
.weather-text { margin-left: 8px; font-size: 14px; line-height: 20px; margin-bottom: 1px; }
.w-desc { color: #4a4a4a; }
.start { width: 29px; height: 29px; }
.task-search { width: 273px; height: 38px; margin-left: 18px; background: rgba(245,247,245,.9); border-radius: 19px; box-shadow: 0 1px 1px rgba(0,0,0,.25); display: flex; align-items: center; padding-left: 12px; position: relative; overflow: hidden; }
.ts-label { margin-left: 13px; font-size: 15.500px; color: #555; }
.ts-art { position: absolute; right: 0; top: 0; width: 72px; height: 38px; }
.task-items { display: flex; margin-left: 1.500px; align-items: center; }
.task-item { width: 55.500px; height: 47px; display: flex; align-items: center; justify-content: center; position: relative; border-radius: 5px; }
.task-active { background: rgba(255,255,255,.5); box-shadow: 0 0 1px rgba(0,0,0,.15); }
.task-dot { position: absolute; left: 50%; margin-left: -3.500px; bottom: 0; width: 7px; height: 5px; border-radius: 3px; background: #6f7672; }
.task-bar { position: absolute; left: 50%; margin-left: -10px; bottom: 0; width: 20px; height: 4px; border-radius: 2px; background: #0078d4; }
.zalo-badge { position: absolute; left: 28px; top: 2px; width: 20px; height: 20px; border-radius: 50%; background: #f00; color: #fff; font-size: 11px; display: flex; align-items: center; justify-content: center; }
.zalo-txt { font-family: "Liberation Sans", sans-serif; font-size: 10px; fill: #1d6fe5; font-weight: bold; }
.tray { margin-left: auto; display: flex; align-items: center; padding-right: 24px; }
.tray-mic { margin-left: 21px; }
.tray-lang { margin-left: 24px; font-size: 14px; }
.tray-wifi { margin-left: 22px; }
.tray-vol { margin-left: 10px; }
.tray-bat { margin-left: 11px; }
.clock { margin-left: 19px; text-align: right; font-size: 14.750px; line-height: 20px; margin-bottom: 2px; }
```
